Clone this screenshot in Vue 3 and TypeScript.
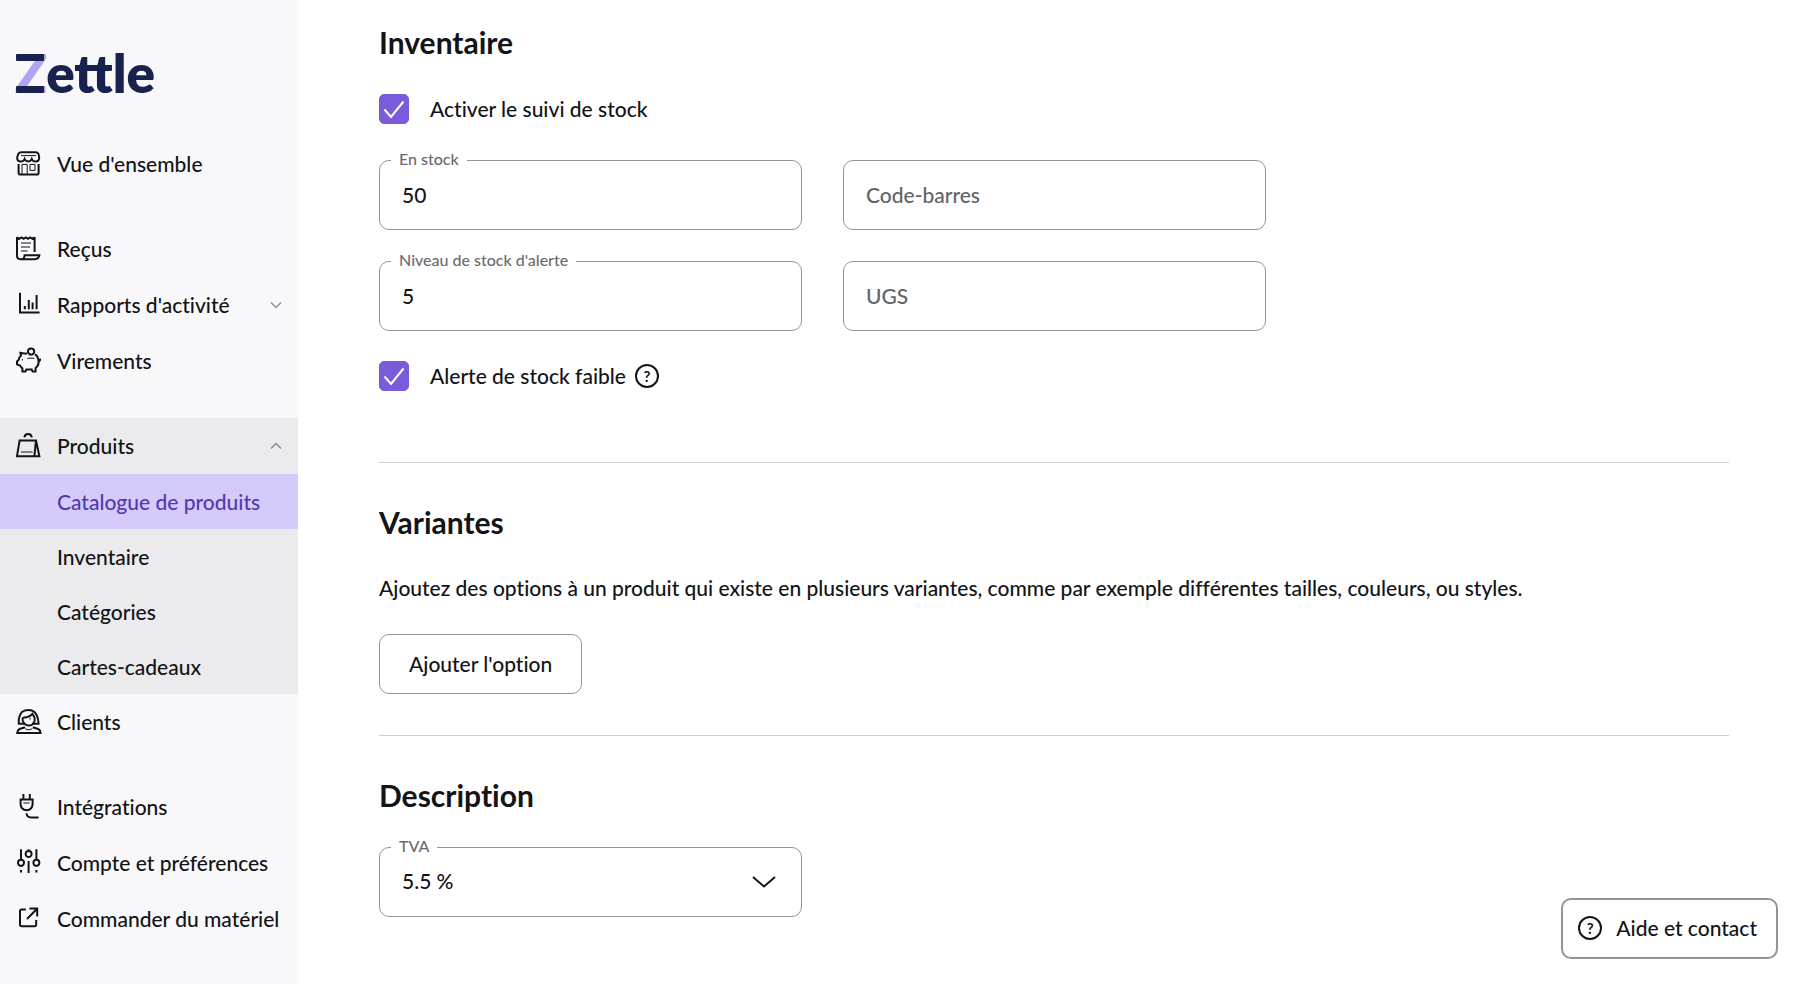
<script setup lang="ts">
import { ref } from 'vue'

type IconName = 'shop' | 'receipt' | 'chart' | 'piggy' | 'bag' | 'person' | 'plug' | 'sliders' | 'external'

interface NavItem {
  label: string
  icon: IconName
  chevron?: 'up' | 'down'
  children?: { label: string; active?: boolean }[]
}

const groups: NavItem[][] = [
  [{ label: "Vue d'ensemble", icon: 'shop' }],
  [
    { label: 'Reçus', icon: 'receipt' },
    { label: "Rapports d'activité", icon: 'chart', chevron: 'down' },
    { label: 'Virements', icon: 'piggy' },
  ],
  [
    {
      label: 'Produits',
      icon: 'bag',
      chevron: 'up',
      children: [
        { label: 'Catalogue de produits', active: true },
        { label: 'Inventaire' },
        { label: 'Catégories' },
        { label: 'Cartes-cadeaux' },
      ],
    },
    { label: 'Clients', icon: 'person' },
  ],
  [
    { label: 'Intégrations', icon: 'plug' },
    { label: 'Compte et préférences', icon: 'sliders' },
    { label: 'Commander du matériel', icon: 'external' },
  ],
]

const icons: Record<IconName, string[]> = {
  shop: [
    'M5 1.2H20C22 1.2 23 4 23.2 6.6C23.3 9 22 10.6 19.8 10.6C17.8 10.6 16.4 9.6 15.8 8C15.2 9.6 14 10.4 12.2 10.4C10.4 10.4 9.2 9.6 8.6 8C8 9.6 6.8 10.6 4.8 10.6C2.4 10.6 1 9 1.2 6.6C1.6 4 3 1.2 5 1.2Z',
    'M2.6 13V21.4Q2.6 23.6 4.8 23.6H20.6Q22.6 23.6 22.6 21.4V13',
  ],
  receipt: [
    'M1 1V19.6Q1 23.2 4.4 23.2H18.6Q22.8 23.2 23.4 19.2H8.6Q8.4 23.2 5.6 23.2M18.6 1V16M1 1.4L3.2 2.8L5.4 1.4L7.6 2.8L9.8 1.4L12 2.8L14.2 1.4L16.4 2.8L18.6 1.4',
  ],
  chart: ['M4 .8V20.4H23.6M8.8 14V17.2M12.8 8V17.2M16.6 10.6V17.2M20.6 3V17.2'],
  piggy: [
    'M11 5.4H7.6Q5.6 4.8 4.4 4.8L5 7.6Q3 9.4 2.6 12L1 13.4V16.4L4 17.6Q5 19.4 6.4 20.4V23.6H9.4L10.4 21.4Q13 21.8 15.6 21.4L16.6 23.6H19.6V20Q22.8 17.6 22.6 13.8Q24.4 13 24.2 10.6M22.6 13.8Q22.4 8.2 19 6.4',
    'M18.2 3.6A3.1 3.1 0 1 1 12 3.6A3.1 3.1 0 1 1 18.2 3.6Z',
  ],
  bag: ['M3.6 7.6H20L23.4 23.2H1L3.6 7.6ZM20 7.6L18.4 23.2M8.4 4.4Q8.8 1 12 1Q15.4 1 15.8 4.4'],
  person: [
    'M9.4 14.8H2.8Q2 3.6 9 1.4Q17 -.2 20.4 5.4Q22.4 9 22.6 14.8H16',
    'M6.8 12Q6 8.4 8 8.4Q13.6 8.2 16.4 4.8Q19.4 8.4 18.6 12Q17 16.6 12.8 16.6Q8.4 16.2 6.8 12Z',
    'M9 18.2L3.6 20Q1.4 21 1.2 24H24.6Q24.4 21 22.2 20L16.8 18.2',
  ],
  plug: ['M7.4 0V5.4M13.8 0V5.4M3.6 5.6H17.6M4.6 5.6V10.4Q5 16 10.6 16.2Q16.2 16 16.6 10.4V5.6M10.6 19.2Q10.8 23.4 15 23.4H22.6'],
  sliders: [
    'M5 -.8V9.6M5 15.8A3 3 0 1 1 5 9.8A3 3 0 1 1 5 15.8ZM5 20V22.6',
    'M12.6 -.8V.8M12.6 7A3 3 0 1 1 12.6 1A3 3 0 1 1 12.6 7ZM12.6 11V23',
    'M20.4 -.8V9.6M20.4 15.8A3 3 0 1 1 20.4 9.8A3 3 0 1 1 20.4 15.8ZM20.4 20V22.6',
  ],
  external: ['M9.8 3.4H5.6Q4 3.4 4 5V18.6Q4 20.2 5.6 20.2H18.6Q20.2 20.2 20.2 18.6V14M13.4 2.6H21.2V10.6M20.8 3L11 13'],
}

const thinLines: Partial<Record<IconName, string>> = {
  shop: 'M5 4.6H20M6 23V13.4H11.2V23M14 13.4H19V19.4H14Z',
  receipt: 'M5 7H15M5 11H14M5 15H11.6',
  piggy: 'M11.4 10.4Q15 9.8 18.4 10.4M6.4 11V12.6',
  bag: 'M5 19H16.6',
  person: 'M9.2 19.8Q12.8 22 16.4 19.8M14 8.6V10.6',
  plug: 'M7.4 9H13.6',
}

const trackStock = ref(true)
const lowStockAlert = ref(true)
const inStock = ref('50')
const alertLevel = ref('5')
const barcode = ref('')
const sku = ref('')
const vat = ref('5.5')
</script>

<template>
  <div class="page">
    <aside class="sidebar">
      <a class="logo" href="#" aria-label="Zettle">
        <svg width="150" height="74" viewBox="-2 -16 150 74">
          <text class="logo-word" x="-1" y="41"><tspan class="logo-z">Z</tspan>ettle</text>
          <rect class="logo-bar" x="0" y="2" width="28" height="7" rx="1" />
          <rect class="logo-bar" x="0" y="34" width="28" height="7" rx="1" />
          <rect class="logo-bar" x="59" y="13" width="35" height="6" />
        </svg>
      </a>
      <nav class="nav" aria-label="Navigation principale">
        <ul v-for="(group, g) in groups" :key="g" class="group">
          <li v-for="item in group" :key="item.label" :class="{ expanded: item.children }">
            <component
              :is="item.chevron ? 'button' : 'a'"
              class="nav-item"
              :href="item.chevron ? undefined : '#'"
              :type="item.chevron ? 'button' : undefined"
              :aria-expanded="item.chevron ? item.chevron === 'up' : undefined"
            >
              <svg class="icon" width="26" height="26" viewBox="0 0 26 26" aria-hidden="true">
                <path v-for="d in icons[item.icon]" :key="d" :d="d" />
                <path v-if="thinLines[item.icon]" class="thin" :d="thinLines[item.icon]" />
              </svg>
              <span>{{ item.label }}</span>
              <svg v-if="item.chevron" class="chevron" width="12" height="8" viewBox="0 0 12 8" aria-hidden="true">
                <path :d="item.chevron === 'up' ? 'M1 6.5L6 1.5L11 6.5' : 'M1 1.5L6 6.5L11 1.5'" />
              </svg>
            </component>
            <ul v-if="item.children" class="submenu">
              <li v-for="child in item.children" :key="child.label">
                <a
                  href="#"
                  class="sub-item"
                  :class="{ active: child.active }"
                  :aria-current="child.active ? 'page' : undefined"
                >{{ child.label }}</a>
              </li>
            </ul>
          </li>
        </ul>
      </nav>
    </aside>

    <main class="content">
      <section class="section inventory">
        <h2>Inventaire</h2>
        <div class="check-row">
          <span class="check">
            <input id="track" v-model="trackStock" type="checkbox" />
            <svg width="30" height="30" viewBox="0 0 30 30" aria-hidden="true"><path d="M5.5 15.5L12 23L24.5 7.5" /></svg>
          </span>
          <label for="track">Activer le suivi de stock</label>
        </div>
        <div class="fields">
          <div class="field">
            <input id="stock" v-model="inStock" type="text" inputmode="numeric" />
            <label for="stock" class="float">En stock</label>
          </div>
          <div class="field">
            <input v-model="barcode" type="text" placeholder="Code-barres" aria-label="Code-barres" />
          </div>
          <div class="field">
            <input id="level" v-model="alertLevel" type="text" inputmode="numeric" />
            <label for="level" class="float">Niveau de stock d'alerte</label>
          </div>
          <div class="field">
            <input v-model="sku" type="text" placeholder="UGS" aria-label="UGS" />
          </div>
        </div>
        <div class="check-row">
          <span class="check">
            <input id="alert" v-model="lowStockAlert" type="checkbox" />
            <svg width="30" height="30" viewBox="0 0 30 30" aria-hidden="true"><path d="M5.5 15.5L12 23L24.5 7.5" /></svg>
          </span>
          <label for="alert">Alerte de stock faible</label>
          <button type="button" class="hint" aria-label="Aide sur l'alerte de stock">
            <span class="question">?</span>
          </button>
        </div>
      </section>

      <section class="section variants">
        <h2>Variantes</h2>
        <p>Ajoutez des options à un produit qui existe en plusieurs variantes, comme par exemple différentes tailles, couleurs, ou styles.</p>
        <button type="button" class="outline">Ajouter l'option</button>
      </section>

      <section class="section">
        <h2>Description</h2>
        <div class="fields">
          <div class="field">
            <select id="vat" v-model="vat">
              <option value="5.5">5.5 %</option>
              <option value="10">10 %</option>
              <option value="20">20 %</option>
            </select>
            <label for="vat" class="float">TVA</label>
            <svg class="caret" width="24" height="12" viewBox="0 0 24 12" aria-hidden="true"><path d="M1 1L12 10.5L23 1" /></svg>
          </div>
        </div>
      </section>
    </main>

    <button type="button" class="help">
      <span class="question">?</span>
      <span>Aide et contact</span>
    </button>
  </div>
</template>

<style>
body {
  margin: 0;
  background: #fff;
}
</style>

<style scoped>
.page {
  display: flex;
  min-height: 100vh;
  font: 500 21px/28px Lato, "Liberation Sans", sans-serif;
  font-variant-ligatures: no-common-ligatures;
  color: #131416;
}

.page *,
.page *::before {
  box-sizing: border-box;
}

button,
input,
select {
  font: inherit;
  font-variant-ligatures: inherit;
  color: inherit;
  margin: 0;
}

ul {
  list-style: none;
  margin: 0;
  padding: 0;
}

path {
  fill: none;
  stroke: currentColor;
  stroke-width: 2;
}

.sidebar {
  flex: 0 0 298px;
  background: #f8f8fb;
}

.logo {
  display: block;
  margin: 36px 14px 26px;
}

.logo svg {
  display: block;
}

.logo-word {
  font: 800 53px Lato, "Liberation Sans", sans-serif;
}

.logo-word,
.logo-bar {
  fill: #19214f;
}

.logo-z {
  fill: #b3a3f2;
}

.nav {
  display: flex;
  flex-direction: column;
  gap: 29px;
}

.expanded {
  background: #ebebed;
}

.nav-item {
  display: flex;
  align-items: center;
  gap: 15px;
  width: 100%;
  height: 56px;
  padding: 0 16px;
  border: 0;
  background: none;
  color: inherit;
  text-decoration: none;
  cursor: pointer;
}

.icon {
  overflow: visible;
}

.icon .thin {
  stroke-width: 1;
}

.chevron {
  margin-left: auto;
  color: #8d8d92;
}

.chevron path {
  stroke-width: 1.5;
}

.sub-item {
  display: flex;
  align-items: center;
  height: 55px;
  padding-left: 57px;
  color: inherit;
  text-decoration: none;
}

.sub-item.active {
  background: #d4cbfb;
  color: #5438b0;
}

.content {
  flex: 1;
  min-width: 0;
  padding: 22px 71px 40px 81px;
}

.section + .section {
  border-top: 1px solid #cfcfd2;
  padding-top: 39px;
}

.inventory {
  padding-bottom: 71px;
}

.variants {
  padding-bottom: 41px;
}

h2 {
  margin: 0 0 32px;
  font-size: 30px;
  line-height: 40px;
  font-weight: 700;
}

p {
  margin: 0 0 32px;
}

.check-row {
  display: flex;
  align-items: center;
}

.check {
  display: grid;
  margin-right: 21px;
}

.check > * {
  grid-area: 1 / 1;
}

.check input {
  appearance: none;
  width: 30px;
  height: 30px;
  border: 1px solid #929496;
  border-radius: 5px;
}

.check input:checked {
  border-color: #7a5cdb;
  background: #7a5cdb;
}

.check svg {
  color: #fff;
  pointer-events: none;
}

.fields {
  display: grid;
  grid-template-columns: 1fr 1fr;
  gap: 31px 41px;
  max-width: 887px;
}

.inventory .fields {
  margin: 36px 0 30px;
}

.field {
  position: relative;
}

.field input,
.field select {
  display: block;
  width: 100%;
  height: 70px;
  padding: 0 22px 2px;
  border: 1px solid #929496;
  border-radius: 10px;
  background: #fff;
  appearance: none;
}

.field input::placeholder {
  color: #626468;
  opacity: 1;
}

.float {
  position: absolute;
  left: 12px;
  top: -11px;
  padding: 0 8px;
  background: #fff;
  color: #696b6f;
  font-size: 16px;
  line-height: 20px;
}

.caret {
  position: absolute;
  right: 26px;
  top: 29px;
  pointer-events: none;
}

.hint {
  display: flex;
  margin-left: 9px;
  padding: 0;
  border: 0;
  background: none;
}

.question {
  display: grid;
  place-items: center;
  width: 24px;
  height: 24px;
  border: 2px solid #131416;
  border-radius: 50%;
  font-size: 15px;
  line-height: 20px;
  font-weight: 700;
}

.outline {
  display: block;
  height: 60px;
  padding: 0 29px;
  border: 1px solid #929496;
  border-radius: 10px;
  background: #fff;
}

.help {
  position: fixed;
  right: 22px;
  bottom: 25px;
  display: flex;
  align-items: center;
  gap: 14px;
  height: 61px;
  padding: 0 19px 1px 15px;
  border: 2px solid #929496;
  border-radius: 10px;
  background: #fff;
}
</style>
